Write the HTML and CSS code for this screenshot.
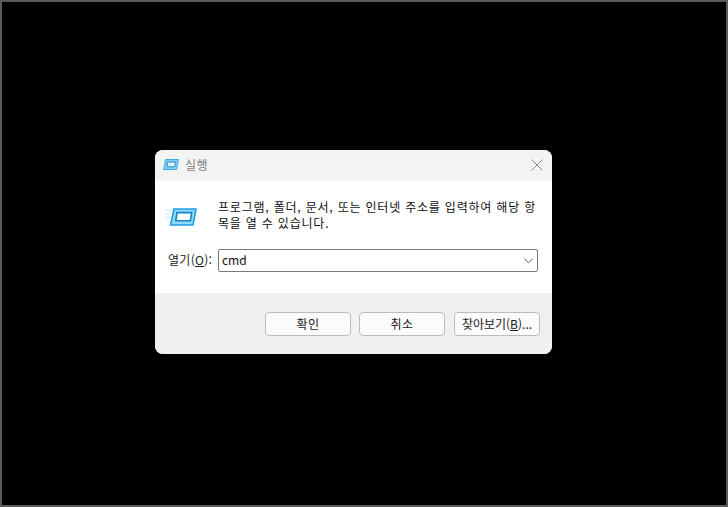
FILE: index.html
```html
<!DOCTYPE html>
<html lang="ko">
<head>
<meta charset="utf-8">
<title>실행</title>
<link rel="stylesheet" href="styles.css">
</head>
<body>
<div class="screen">
  <div class="dialog">
    <div class="titlebar">
      <svg class="title-icon" viewBox="0 0 16 11" width="16" height="11">
        <path d="M2.6 .5H15.5L13.6 10.5H.6z" fill="#7fd0f2" stroke="#3aaee4" stroke-width="1"/>
        <path d="M4.6 3H12.4L11.8 7.8H4z" fill="#dff3fc" stroke="#2a8fcf" stroke-width="1"/>
      </svg>
      <span class="title-text">실행</span>
      <svg class="close" viewBox="0 0 12 12" width="12" height="12">
        <path d="M.5 .5L11.5 11.5M11.5 .5L.5 11.5" stroke="#8c8c8c" stroke-width="1" fill="none"/>
      </svg>
    </div>
    <div class="content">
      <div class="intro">
        <svg class="run-icon" viewBox="0 0 32 18" width="32" height="18">
          <path d="M0 2.5H8M0 6H7M0 9.5H6" stroke="#d3effb" stroke-width="1.4"/>
          <path d="M9 1H31L28 17H5.5z" fill="#8fdaf6" stroke="#1f9fe0" stroke-width="1.6"/>
          <path d="M12 4.6H26.6L25.4 12.8H10.8z" fill="#fff" stroke="#1681c6" stroke-width="1.6"/>
        </svg>
        <p class="message">프로그램, 폴더, 문서, 또는 인터넷 주소를 입력하여 해당 항목을 열 수 있습니다.</p>
      </div>
      <div class="open-row">
        <span class="open-label">열기(<u>O</u>):</span>
        <div class="combo">
          <span class="combo-value">cmd</span>
          <svg class="chevron" viewBox="0 0 10 6" width="9" height="6">
            <path d="M.5 .5L5 5L9.5 .5" stroke="#444" stroke-width="1" fill="none"/>
          </svg>
        </div>
      </div>
    </div>
    <div class="footer">
      <button class="btn">확인</button>
      <button class="btn">취소</button>
      <button class="btn btn-browse">찾아보기(<u>B</u>)...</button>
    </div>
  </div>
</div>
</body>
</html>
```
FILE: styles.css
```css
* { box-sizing: border-box; }
html, body { margin: 0; height: 100%; }
body {
  background: #000;
  font-family: "Noto Sans CJK KR", "Noto Sans", sans-serif;
  font-size: 12px;
  color: #1a1a1a;
}
.screen {
  width: 728px;
  height: 507px;
  border: 2px solid #5c5c5c;
  padding: 148px 0 0 153px;
  background: #000;
  overflow: hidden;
}
.dialog {
  width: 397px;
  height: 204px;
  border-radius: 8px;
  overflow: hidden;
  display: flex;
  flex-direction: column;
  background: #fff;
}
.titlebar {
  height: 31px;
  background: #f3f3f3;
  display: flex;
  align-items: center;
  padding: 0 9px 0 8px;
}
.title-icon { margin-right: 6px; margin-top: -3px; }
.title-text { color: #7c7c7c; font-size: 12px; letter-spacing: .5px; flex: 1; margin-top: -2px; }
.close { margin-top: -2px; }
.content {
  flex: 1;
  background: #fff;
  padding: 15px 14px 0 10px;
  display: flex;
  flex-direction: column;
}
.intro { display: flex; align-items: flex-start; }
.run-icon { margin: 12px 21px 0 0; flex: none; }
.message {
  margin: 3px 0 0;
  width: 321px;
  line-height: 16px;
  letter-spacing: .8px;
  word-break: break-all;
  color: #111;
}
.open-row {
  display: flex;
  align-items: center;
  margin: 18px 0 0 3px;
}
.open-label { width: 50px; color: #222; letter-spacing: .3px; padding-bottom: 2px; }
.combo {
  width: 320px;
  height: 23px;
  border: 1px solid #7a7a7a;
  border-radius: 2px;
  background: #fff;
  display: flex;
  align-items: center;
  justify-content: space-between;
  padding: 0 4px 2px 3px;
}
.combo-value { font-size: 12px; color: #111; }
.chevron { margin-top: 2px; }
.footer {
  height: 61px;
  background: #f0f0f0;
  display: flex;
  justify-content: flex-end;
  gap: 8px;
  padding: 19px 12px 0 0;
}
.btn {
  width: 86px;
  height: 24px;
  border: 1px solid #bcbcbc;
  border-radius: 4px;
  background: #fbfbfb;
  font: inherit;
  letter-spacing: .4px;
  color: #1a1a1a;
  padding: 0 0 2px;
}
.btn-browse { margin-left: 1px; letter-spacing: 0; }
```
